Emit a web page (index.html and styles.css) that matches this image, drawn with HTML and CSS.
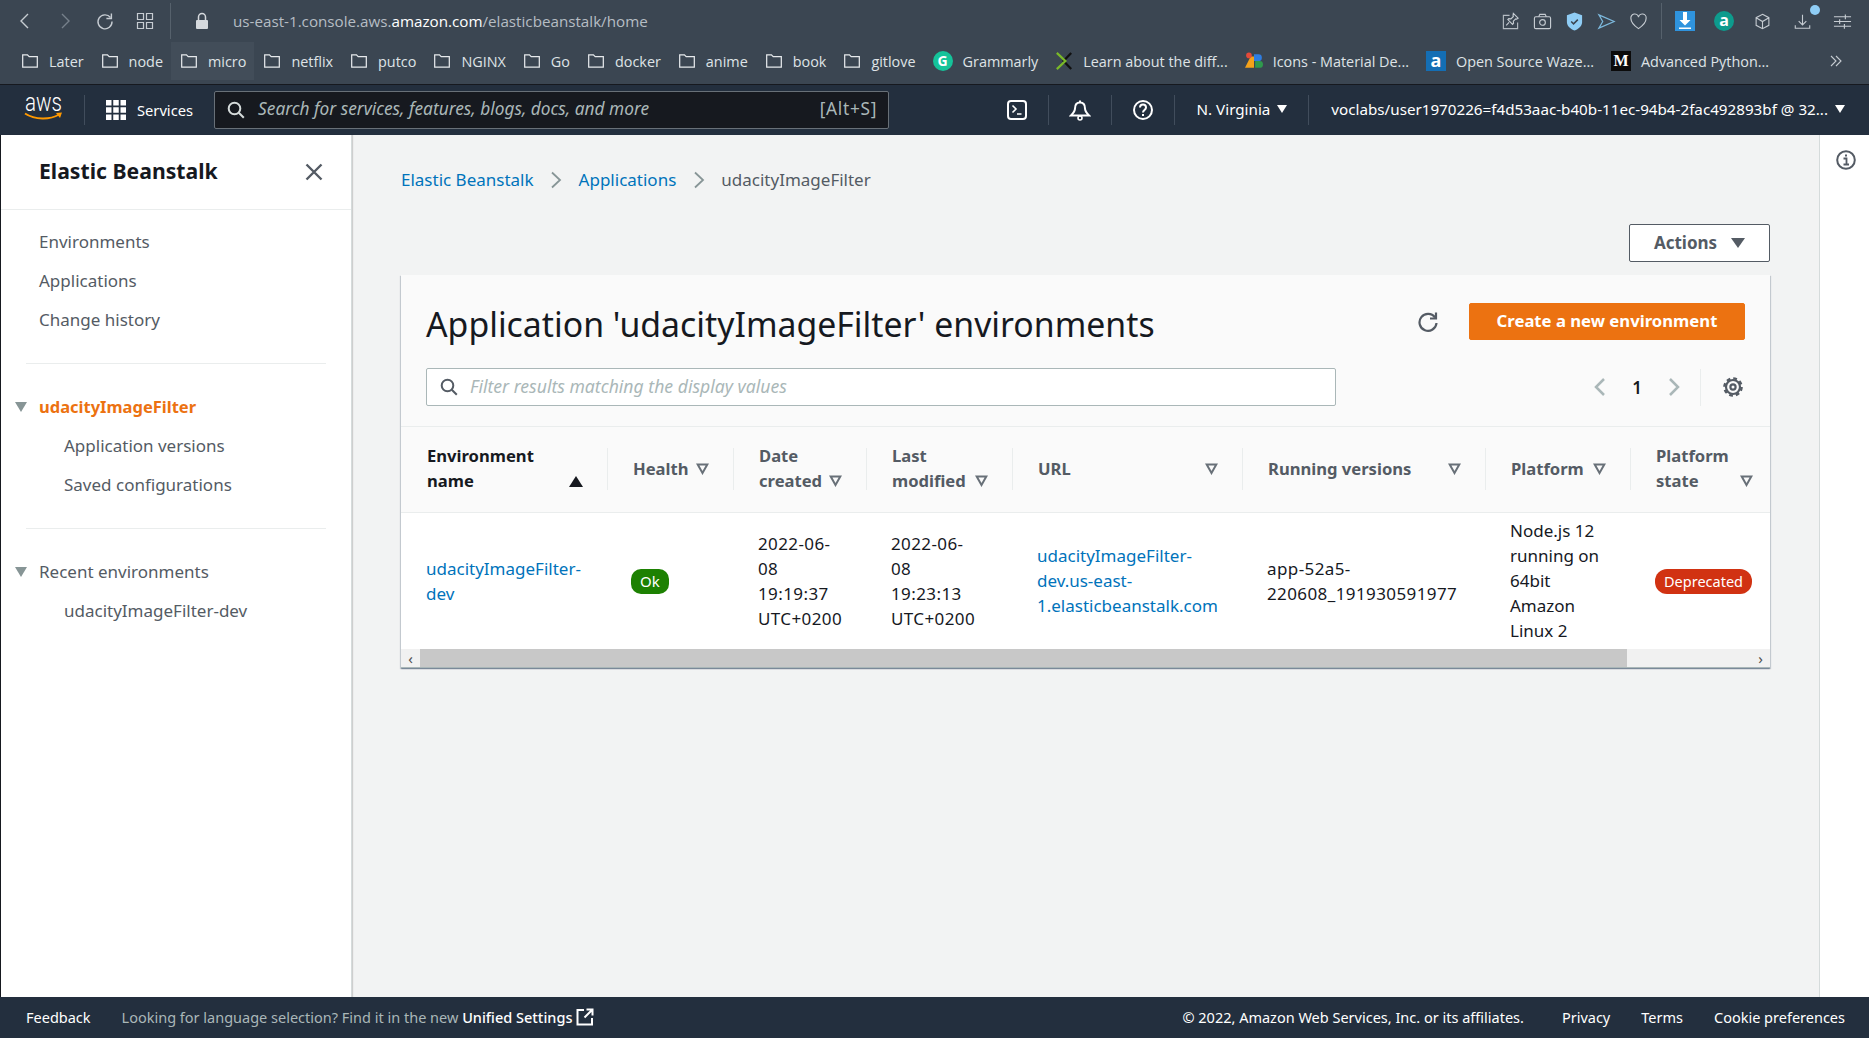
FILE: index.html
```html
<!DOCTYPE html>
<html lang="en">
<head>
    <meta charset="UTF-8">
    <meta name="viewport" content="width=device-width, initial-scale=1.0">
    <title>Elastic Beanstalk</title>
    <link rel="stylesheet" href="styles.css">
</head>
<body>
    <svg class="defs" width="0" height="0">
        <symbol id="folder" viewBox="0 0 16 16"><path d="M1.5 2.5h4.2l1.6 1.6h7.2v9.4h-13z" fill="none" stroke="currentColor" stroke-width="1.1"/></symbol>
        <symbol id="filter" viewBox="0 0 13 12"><path d="M1.7 1.5h9.6L6.500 10z" fill="none" stroke="#687078" stroke-width="2"/></symbol>
    </svg>

    <div class="browser">
        <div class="browser-top">
            <div class="browser-nav">
                <svg class="ico" viewBox="0 0 20 20"><path d="M13 3l-7 7 7 7" fill="none" stroke="#c6ccd2" stroke-width="1.4"/></svg>
                <svg class="ico" viewBox="0 0 20 20"><path d="M7 3l7 7-7 7" fill="none" stroke="#76808b" stroke-width="1.4"/></svg>
                <svg class="ico" viewBox="0 0 20 20"><path d="M15.500 6.500A7 7 0 1 0 17 10.500" fill="none" stroke="#c6ccd2" stroke-width="1.4"/><path d="M16.400 2.500v5h-5" fill="none" stroke="#c6ccd2" stroke-width="1.4"/></svg>
                <svg class="ico" viewBox="0 0 20 20"><path d="M2.500 2.500h6v6h-6zM11.500 2.500h6v6h-6zM2.500 11.500h6v6h-6zM11.500 11.500h6v6h-6z" fill="none" stroke="#c6ccd2" stroke-width="1.2"/></svg>
            </div>
            <div class="browser-sep"></div>
            <svg class="lock" viewBox="0 0 14 18"><path d="M3.500 8V5a3.500 3.500 0 0 1 7 0v3" fill="none" stroke="#d5d9dd" stroke-width="1.5"/><rect x="1" y="8" width="12" height="9" rx="1" fill="#d5d9dd"/></svg>
            <div class="url">us-east-1.console.aws.<b>amazon.com</b>/elasticbeanstalk/home</div>
            <div class="browser-tools">
                <svg class="tool" viewBox="0 0 20 20"><path d="M9 3.500H2.500v14h15V17M6 17.500h11.500V11" fill="none" stroke="#b4bbc2" stroke-width="1.2"/><path d="M13 1.500l5 5-1.500 1-1-.3-2.500 2.500.2 2.300-1 1-5-5 1-1 2.300.2 2.500-2.500-.3-1zM8.500 11l-3 3" fill="none" stroke="#c6ccd2" stroke-width="1.2"/></svg>
                <svg class="tool" viewBox="0 0 20 20"><rect x="1.500" y="5" width="17" height="12.500" rx="1.500" fill="none" stroke="#c6ccd2" stroke-width="1.2"/><path d="M6 5l1.200-2.500h5.600L14 5" fill="none" stroke="#c6ccd2" stroke-width="1.2"/><circle cx="10" cy="11" r="3" fill="none" stroke="#c6ccd2" stroke-width="1.2"/></svg>
                <svg class="tool" viewBox="0 0 20 20"><path d="M10 0.500l8 3v7c0 4.500-4 7.500-8 9-4-1.500-8-4.500-8-9v-7z" fill="#8fcdf5"/><path d="M6.500 10l2.500 2.500 4.500-4.500" fill="none" stroke="#3b4652" stroke-width="1.6"/></svg>
                <svg class="tool" viewBox="0 0 20 20"><path d="M2 3l16 7-16 7 4-7z" fill="none" stroke="#7db9dd" stroke-width="1.3"/></svg>
                <svg class="tool" viewBox="0 0 20 20"><path d="M10 17.500C5 14 2 11 2 6.800A4 4 0 0 1 10 5.500a4 4 0 0 1 8 1.300C18 11 15 14 10 17.500z" fill="none" stroke="#c6ccd2" stroke-width="1.2"/></svg>
                <div class="browser-sep short"></div>
                <svg class="tool blue" viewBox="0 0 20 20"><rect width="20" height="20" fill="#2f93dd"/><path d="M8 1h4v8h3.500L10 14.500 4.500 9H8z" fill="#fff"/><rect x="4" y="16.500" width="12" height="1.500" fill="#fff"/></svg>
                <div class="ext-a">a</div>
                <svg class="tool small" viewBox="0 0 20 20"><path d="M10 1.500l7.500 4v9l-7.500 4-7.500-4v-9zM2.500 5.500l7.500 4.500 7.500-4.500M10 10v8.500" fill="none" stroke="#c6ccd2" stroke-width="1.3"/></svg>
                <div class="dl">
                    <svg class="tool small" viewBox="0 0 20 20"><path d="M10 2v12M5.500 9.500l4.500 4.500 4.500-4.500M1.500 14.500v3.500h17v-3.500" fill="none" stroke="#c6ccd2" stroke-width="1.3"/></svg>
                    <span class="dl-dot"></span>
                </div>
                <svg class="tool" viewBox="0 0 20 20"><path d="M1 5h18M1 10h18M1 15h18M13 2.500v5M7 7.500v5M12 12.500v5" fill="none" stroke="#c6ccd2" stroke-width="1.2"/></svg>
            </div>
        </div>
        <div class="bookmarks">
            <div class="bm"><svg class="bm-ico"><use href="#folder"/></svg>Later</div>
            <div class="bm"><svg class="bm-ico"><use href="#folder"/></svg>node</div>
            <div class="bm hover"><svg class="bm-ico"><use href="#folder"/></svg>micro</div>
            <div class="bm"><svg class="bm-ico"><use href="#folder"/></svg>netflix</div>
            <div class="bm"><svg class="bm-ico"><use href="#folder"/></svg>putco</div>
            <div class="bm"><svg class="bm-ico"><use href="#folder"/></svg>NGINX</div>
            <div class="bm"><svg class="bm-ico"><use href="#folder"/></svg>Go</div>
            <div class="bm"><svg class="bm-ico"><use href="#folder"/></svg>docker</div>
            <div class="bm"><svg class="bm-ico"><use href="#folder"/></svg>anime</div>
            <div class="bm"><svg class="bm-ico"><use href="#folder"/></svg>book</div>
            <div class="bm"><svg class="bm-ico"><use href="#folder"/></svg>gitlove</div>
            <div class="bm"><span class="fav fav-g">G</span>Grammarly</div>
            <div class="bm"><svg class="bm-ico" viewBox="0 0 20 20"><path d="M18 1L9.500 10 18 19" fill="none" stroke="#111" stroke-width="2.500"/><path d="M2 1l9.500 9L2 19" fill="none" stroke="#7ab929" stroke-width="2.500"/></svg>Learn about the diff...</div>
            <div class="bm"><svg class="bm-ico" viewBox="0 0 16 16"><path d="M0 14L5 4h3v10z" fill="#f4a21a"/><circle cx="3.500" cy="3" r="2.500" fill="#e34a3a"/><path d="M8 2h4a3 3 0 0 1 0 6H8z" fill="#2f7de1"/><path d="M9 8h4a3 3 0 0 1 0 6H9z" fill="#2f9a4d"/></svg>Icons - Material De...</div>
            <div class="bm"><span class="fav fav-a">a</span>Open Source Waze...</div>
            <div class="bm"><span class="fav fav-m">M</span>Advanced Python...</div>
            <svg class="more" viewBox="0 0 14 14"><path d="M2 2l5 5-5 5M7 2l5 5-5 5" fill="none" stroke="#c6ccd2" stroke-width="1.1"/></svg>
        </div>
    </div>

    <div class="topnav">
        <svg class="aws-logo" viewBox="0 0 40 26">
            <text x="1" y="14.500" class="aws-text" textLength="37" lengthAdjust="spacingAndGlyphs">aws</text>
            <path d="M1 17.500c10 6.500 25 6.500 34 1" fill="none" stroke="#f90" stroke-width="2"/>
            <path d="M32 17l6-.5-2 5.500z" fill="#f90"/>
        </svg>
        <div class="nav-sep"></div>
        <div class="services">
            <svg class="grid" viewBox="0 0 20 20"><path d="M0 0h5.500v5.500H0zM7.250 0h5.500v5.500h-5.500zM14.500 0H20v5.500h-5.500zM0 7.250h5.500v5.500H0zM7.250 7.250h5.500v5.500h-5.500zM14.500 7.250H20v5.500h-5.500zM0 14.500h5.500V20H0zM7.250 14.500h5.500V20h-5.500zM14.500 14.500H20V20h-5.500z" fill="#fff"/></svg>
            <span>Services</span>
        </div>
        <div class="nav-search">
            <svg class="search-ico light" viewBox="0 0 18 18"><circle cx="7.500" cy="7.500" r="5.800" fill="none" stroke="currentColor" stroke-width="2"/><path d="M11.800 11.800l5 5" stroke="currentColor" stroke-width="2"/></svg>
            <span class="nav-search-text">Search for services, features, blogs, docs, and more</span>
            <span class="nav-search-key">[Alt+S]</span>
        </div>
        <div class="nav-right">
            <div class="nav-icon"><svg viewBox="0 0 20 20" width="20" height="20"><rect x="1" y="1" width="18" height="18" rx="3" fill="none" stroke="#fff" stroke-width="2"/><path d="M5.500 5.500l3.500 3.500-3.500 3.500M10 14h4.500" fill="none" stroke="#fff" stroke-width="1.6"/></svg></div>
            <div class="nav-icon"><svg viewBox="0 0 22 22" width="22" height="22"><path d="M11 1.500v2M11 3.500c-3.500 0-5 2.500-5 6 0 3-1.500 4.500-4 7h18c-2.500-2.500-4-4-4-7 0-3.500-1.500-6-5-6z" fill="none" stroke="#fff" stroke-width="2"/><circle cx="11" cy="19" r="2" fill="none" stroke="#fff" stroke-width="1.6"/></svg></div>
            <div class="nav-icon"><svg viewBox="0 0 22 22" width="22" height="22"><circle cx="11" cy="11" r="9" fill="none" stroke="#fff" stroke-width="2"/><path d="M8 8.500c0-4 6-4 6 0 0 2.500-3 2.500-3 5" fill="none" stroke="#fff" stroke-width="2"/><rect x="10" y="15" width="2" height="2" fill="#fff"/></svg></div>
            <div class="nav-menu region">N. Virginia<span class="caret"></span></div>
            <div class="nav-menu account">voclabs/user1970226=f4d53aac-b40b-11ec-94b4-2fac492893bf @ 32...<span class="caret"></span></div>
        </div>
    </div>

    <div class="layout">
        <div class="sidebar">
            <div class="side-head">
                <span>Elastic Beanstalk</span>
                <svg width="18" height="18" viewBox="0 0 18 18"><path d="M1.500 1.500l15 15M16.500 1.500l-15 15" stroke="#545b64" stroke-width="2.400"/></svg>
            </div>
            <div class="side-group first">
                <div class="side-item">Environments</div>
                <div class="side-item">Applications</div>
                <div class="side-item">Change history</div>
            </div>
            <div class="side-div"></div>
            <div class="side-group">
                <div class="side-item parent active"><span class="side-caret"></span>udacityImageFilter</div>
                <div class="side-item sub">Application versions</div>
                <div class="side-item sub">Saved configurations</div>
            </div>
            <div class="side-div"></div>
            <div class="side-group">
                <div class="side-item parent"><span class="side-caret"></span>Recent environments</div>
                <div class="side-item sub">udacityImageFilter-dev</div>
            </div>
        </div>

        <div class="main">
            <div class="crumbs">
                <a>Elastic Beanstalk</a>
                <svg class="crumb-sep" viewBox="0 0 12 18"><path d="M2 1.500L10 9l-8 7.500" fill="none" stroke="#879596" stroke-width="1.8"/></svg>
                <a>Applications</a>
                <svg class="crumb-sep" viewBox="0 0 12 18"><path d="M2 1.500L10 9l-8 7.500" fill="none" stroke="#879596" stroke-width="1.8"/></svg>
                <span>udacityImageFilter</span>
            </div>
            <div class="page-actions">
                <button type="button" class="btn-actions">Actions<span class="caret dark"></span></button>
            </div>

            <div class="card">
                <div class="card-head">
                    <h1>Application 'udacityImageFilter' environments</h1>
                    <svg class="refresh" viewBox="0 0 22 22"><path d="M18 6.500A8.500 8.500 0 1 0 19.500 12" fill="none" stroke="#545b64" stroke-width="2.200"/><path d="M19 1.500v6h-6" fill="none" stroke="#545b64" stroke-width="2.200"/></svg>
                    <button type="button" class="btn-create">Create a new environment</button>
                </div>
                <div class="card-tools">
                    <div class="filter-box">
                        <svg class="search-ico" viewBox="0 0 18 18"><circle cx="7.500" cy="7.500" r="5.800" fill="none" stroke="currentColor" stroke-width="2"/><path d="M11.800 11.800l5 5" stroke="currentColor" stroke-width="2"/></svg>
                        <span>Filter results matching the display values</span>
                    </div>
                    <div class="pager">
                        <svg class="pg-arrow" viewBox="0 0 12 20"><path d="M10 2L2 10l8 8" fill="none" stroke="#aab7b8" stroke-width="2.500"/></svg>
                        <b>1</b>
                        <svg class="pg-arrow" viewBox="0 0 12 20"><path d="M2 2l8 8-8 8" fill="none" stroke="#aab7b8" stroke-width="2.500"/></svg>
                        <div class="pg-sep"></div>
                        <svg class="gear" viewBox="0 0 20 20"><circle cx="10" cy="10" r="7" fill="none" stroke="#545b64" stroke-width="2.200"/><circle cx="10" cy="10" r="8.600" fill="none" stroke="#545b64" stroke-width="2.400" stroke-dasharray="3.750 3"/><circle cx="10" cy="10" r="2.600" fill="none" stroke="#545b64" stroke-width="2.200"/></svg>
                    </div>
                </div>

                <table class="env-table">
                    <colgroup>
                        <col class="c-name"><col class="c-health"><col class="c-date"><col class="c-mod"><col class="c-url"><col class="c-run"><col class="c-plat"><col class="c-state">
                    </colgroup>
                    <thead>
                        <tr>
                            <th class="no-sep"><div class="th-in"><span class="strong">Environment<br>name</span><span class="sort-up"></span></div></th>
                            <th><div class="th-in"><span>Health</span><svg class="flt"><use href="#filter"/></svg></div></th>
                            <th><div class="th-in"><span>Date<br>created</span><svg class="flt"><use href="#filter"/></svg></div></th>
                            <th><div class="th-in"><span>Last<br>modified</span><svg class="flt"><use href="#filter"/></svg></div></th>
                            <th><div class="th-in"><span>URL</span><svg class="flt"><use href="#filter"/></svg></div></th>
                            <th><div class="th-in"><span>Running versions</span><svg class="flt"><use href="#filter"/></svg></div></th>
                            <th><div class="th-in"><span>Platform</span><svg class="flt"><use href="#filter"/></svg></div></th>
                            <th class="last"><div class="th-in"><span>Platform<br>state</span><svg class="flt"><use href="#filter"/></svg></div></th>
                        </tr>
                    </thead>
                    <tbody>
                        <tr>
                            <td><a>udacityImageFilter-<br>dev</a></td>
                            <td><span class="pill ok">Ok</span></td>
                            <td class="num">2022-06-<br>08<br>19:19:37<br>UTC+0200</td>
                            <td class="num">2022-06-<br>08<br>19:23:13<br>UTC+0200</td>
                            <td><a>udacityImageFilter-<br>dev.us-east-<br>1.elasticbeanstalk.com</a></td>
                            <td class="num">app-52a5-<br>220608_191930591977</td>
                            <td>Node.js 12<br>running on<br>64bit<br>Amazon<br>Linux 2</td>
                            <td><span class="pill bad">Deprecated</span></td>
                        </tr>
                    </tbody>
                </table>

                <div class="hscroll">
                    <span class="hs-arrow">&#8249;</span>
                    <div class="hs-thumb"></div>
                    <span class="hs-arrow right">&#8250;</span>
                </div>
            </div>
        </div>

        <div class="help-rail">
            <svg width="22" height="22" viewBox="0 0 22 22"><circle cx="11" cy="11" r="8.800" fill="none" stroke="#545b64" stroke-width="2"/><path d="M8.500 9.500H11.500V15M8.500 15.500h5.500" fill="none" stroke="#545b64" stroke-width="1.800"/><rect x="10" y="5.500" width="2" height="2" fill="#545b64"/></svg>
        </div>
    </div>

    <div class="footer">
        <span class="ft-feedback">Feedback</span>
        <span class="ft-lang">Looking for language selection? Find it in the new <b>Unified Settings</b></span>
        <svg class="ft-ext" viewBox="0 0 18 18"><path d="M8 2H1.500v14.500H16V10M10.500 1.500h6v6M16.500 1.500l-8 8" fill="none" stroke="#fff" stroke-width="2"/></svg>
        <div class="ft-right">
            <span class="ft-copy">&copy; 2022, Amazon Web Services, Inc. or its affiliates.</span>
            <span>Privacy</span>
            <span>Terms</span>
            <span>Cookie preferences</span>
        </div>
    </div>
</body>
</html>
```

FILE: styles.css
```css
* {
    box-sizing: border-box;
}
html, body {
    height: 100%;
}
body {
    margin: 0;
    display: flex;
    flex-direction: column;
    overflow: hidden;
    font-family: "Noto Sans", Arial, sans-serif;
    font-size: 17px;
    color: #16191f;
    background: #f2f3f3;
}
.defs {
    position: absolute;
}

/* browser chrome */
.browser {
    height: 84px;
    background: #3b4652;
    color: #dfe3e6;
    font-family: "Open Sans", Arial, sans-serif;
    font-size: 14.4px;
    flex: none;
}
.browser-top {
    height: 42px;
    display: flex;
    align-items: center;
    padding-left: 15px;
}
.browser-nav {
    display: flex;
    gap: 20px;
    align-items: center;
}
.ico {
    width: 20px;
    height: 20px;
}
.browser-sep {
    width: 1px;
    height: 36px;
    background: #56616c;
    margin-left: 15px;
}
.browser-sep.short {
    margin: 0;
}
.lock {
    width: 14px;
    height: 18px;
    margin-left: 24px;
}
.url {
    margin-left: 24px;
    font-size: 15.2px;
    color: #b6bdc4;
}
.url b {
    font-weight: 400;
    color: #fff;
}
.browser-tools {
    margin-left: auto;
    display: flex;
    align-items: center;
    gap: 13px;
    padding-right: 17px;
}
.tool {
    width: 19px;
    height: 19px;
    display: block;
}
.tool.blue {
    width: 20px;
    height: 20px;
}
.tool.small {
    width: 17px;
    height: 17px;
    margin: 0 1px;
}
.ext-a {
    width: 20px;
    height: 20px;
    border-radius: 50%;
    background: #0d9b8d;
    color: #fff;
    font-weight: 700;
    font-size: 16px;
    line-height: 18px;
    text-align: center;
    margin: 0 6px;
}
.dl {
    position: relative;
    margin: 0 8px;
}
.dl-dot {
    position: absolute;
    top: -8px;
    right: -8px;
    width: 10px;
    height: 10px;
    border-radius: 50%;
    background: #8fcdf5;
}
.bookmarks {
    height: 42px;
    display: flex;
    align-items: center;
    padding: 0 0 4px 12px;
    position: relative;
}
.bm {
    display: flex;
    align-items: center;
    height: 38px;
    padding: 0 8px 0 9px;
    gap: 10px;
    white-space: nowrap;
}
.bm.hover {
    background: #424d59;
}
.bm-ico {
    width: 18px;
    height: 18px;
    flex: none;
    color: #e6e9ec;
}
.fav {
    width: 20px;
    height: 20px;
    flex: none;
    color: #fff;
    font-weight: 700;
    text-align: center;
}
.fav-g {
    background: #15c39a;
    border-radius: 50%;
    font-size: 14px;
    line-height: 19px;
}
.fav-a {
    background: #146eb4;
    font-size: 18px;
    line-height: 18px;
}
.fav-m {
    background: #0b0b0b;
    font-family: "Liberation Serif", serif;
    font-size: 16px;
    line-height: 20px;
}
.more {
    position: absolute;
    right: 26px;
    width: 14px;
    height: 14px;
}

/* aws nav */
.topnav {
    height: 51px;
    flex: none;
    background: #232f3e;
    border-top: 1px solid #16191f;
    display: flex;
    align-items: center;
    color: #fff;
    font-size: 15.2px;
}
.aws-logo {
    width: 40px;
    height: 26px;
    margin: -3px 0 0 24px;
    overflow: visible;
}
.aws-text {
    font-family: Roboto, sans-serif;
    font-weight: 300;
    font-size: 26px;
    fill: #fff;
}
.nav-sep {
    width: 1px;
    height: 30px;
    background: #414d5c;
    margin-left: 20px;
}
.services {
    display: flex;
    align-items: center;
    gap: 11px;
    margin-left: 21px;
    font-size: 14.7px;
}
.grid {
    width: 20px;
    height: 20px;
}
.nav-search {
    width: 675px;
    height: 38px;
    margin-left: 21px;
    background: #16191f;
    border: 1px solid #687078;
    border-radius: 2px;
    display: flex;
    align-items: center;
    padding: 0 11px 0 12px;
    color: #aab7b8;
    font-size: 17.3px;
}
.search-ico {
    width: 18px;
    height: 18px;
    color: #545b64;
    flex: none;
}
.search-ico.light {
    color: #d5dbdb;
}
.nav-search-text {
    font-style: italic;
    margin: 0 0 3px 13px;
}
.nav-search-key {
    margin: 0 0 3px auto;
    letter-spacing: 0.7px;
}
.nav-right {
    display: flex;
    align-items: center;
    margin-left: auto;
    height: 30px;
    padding-right: 24px;
}
.nav-icon {
    width: 63px;
    display: flex;
    justify-content: center;
    border-right: 1px solid #414d5c;
    height: 30px;
    align-items: center;
}
.nav-menu {
    display: flex;
    align-items: center;
    white-space: nowrap;
    height: 30px;
    padding-bottom: 2px;
}
.region {
    padding-left: 22px;
    padding-right: 21px;
    border-right: 1px solid #414d5c;
}
.account {
    padding-left: 22px;
}
.caret {
    width: 0;
    height: 0;
    margin-left: 7px;
    border-left: 5.5px solid transparent;
    border-right: 5.5px solid transparent;
    border-top: 8px solid #fff;
}
.caret.dark {
    margin-left: 14px;
    margin-top: 2px;
    border-top-color: #545b64;
    border-left-width: 7px;
    border-right-width: 7px;
    border-top-width: 10px;
}

/* page layout */
.layout {
    flex: 1;
    display: flex;
    min-height: 0;
}
.sidebar {
    width: 352px;
    flex: none;
    background: #fff;
    border-left: 1px solid #16191f;
    border-right: 1px solid #d5dbdb;
    box-shadow: 1px 0 1px rgba(0, 0, 0, 0.15);
    color: #545b64;
}
.side-head {
    height: 75px;
    display: flex;
    align-items: center;
    justify-content: space-between;
    padding: 0 28px 3px 38px;
    border-bottom: 1px solid #eaeded;
    font-size: 21.2px;
    font-weight: 700;
    color: #16191f;
}
.side-head svg {
    margin-top: 3px;
}
.side-group {
    padding: 23px 0 24px;
}
.side-group.first {
    padding-top: 12px;
    padding-bottom: 24px;
}
.side-item {
    height: 39px;
    line-height: 39px;
    padding-left: 38px;
    position: relative;
}
.side-item.sub {
    padding-left: 63px;
}
.side-item.active {
    color: #ec7211;
    font-weight: 700;
    font-size: 16.5px;
}
.side-caret {
    position: absolute;
    left: 14px;
    top: 15px;
    width: 0;
    height: 0;
    border-left: 6.5px solid transparent;
    border-right: 6.5px solid transparent;
    border-top: 10px solid #879596;
}
.side-div {
    height: 1px;
    margin: 0 25px;
    background: #eaeded;
}

.main {
    flex: 1;
    min-width: 0;
    padding: 0 49px;
}
.crumbs {
    display: flex;
    align-items: center;
    height: 25px;
    margin-top: 32px;
    color: #545b64;
}
.crumbs a, .env-table a {
    color: #0073bb;
}
.crumb-sep {
    width: 12px;
    height: 18px;
    margin: 0 16.5px;
}
.page-actions {
    display: flex;
    justify-content: flex-end;
    margin-top: 32px;
}
.btn-actions {
    width: 141px;
    height: 38px;
    display: flex;
    align-items: center;
    justify-content: center;
    padding-bottom: 3px;
    background: #fff;
    border: 1px solid #545b64;
    border-radius: 2px;
    color: #545b64;
    font: 700 17px "Noto Sans", Arial, sans-serif;
}
.card {
    margin-top: 13px;
    background: #fafafa;
    box-shadow: 0 1px 1px 0 rgba(0, 31, 63, 0.3), 1px 1px 1px 0 rgba(0, 31, 63, 0.15), -1px 1px 1px 0 rgba(0, 31, 63, 0.15);
}
.card-head {
    height: 93px;
    display: flex;
    align-items: center;
    padding: 0 25px;
}
.card-head h1 {
    margin: 4px 0 0;
    flex: 1;
    font-size: 33.8px;
    font-weight: 400;
    color: #16191f;
}
.refresh {
    width: 22px;
    height: 22px;
    margin: 0 30px 0 0;
}
.btn-create {
    width: 276px;
    height: 37px;
    margin-top: -1px;
    padding-bottom: 3px;
    background: #ec7211;
    border: 1px solid #ec7211;
    border-radius: 2px;
    color: #fff;
    font: 700 16.7px "Noto Sans", Arial, sans-serif;
}
.card-tools {
    height: 59px;
    display: flex;
    align-items: flex-start;
    justify-content: space-between;
    padding: 0 25px;
    border-bottom: 1px solid #eaeded;
}
.filter-box {
    width: 910px;
    height: 38px;
    display: flex;
    align-items: center;
    gap: 12px;
    padding-left: 13px;
    background: #fff;
    border: 1px solid #aab7b8;
    border-radius: 2px;
    color: #aab7b8;
    font-size: 17.6px;
    font-style: italic;
}
.filter-box span {
    margin-bottom: 2px;
}
.pager {
    display: flex;
    align-items: center;
    height: 38px;
}
.pg-arrow {
    width: 12px;
    height: 20px;
}
.pager b {
    width: 62px;
    text-align: center;
    font-weight: 600;
}
.pg-sep {
    width: 1px;
    height: 37px;
    margin-left: 20px;
    background: #eaeded;
}
.gear {
    width: 20px;
    height: 20px;
    margin: 0 2px 0 22px;
}
.env-table {
    width: 100%;
    table-layout: fixed;
    border-collapse: collapse;
    background: #fff;
}
.c-name { width: 206px; }
.c-health { width: 126px; }
.c-date { width: 133px; }
.c-mod { width: 146px; }
.c-url { width: 230px; }
.c-run { width: 243px; }
.c-plat { width: 145px; }
.c-state { width: 140px; }
.env-table th {
    height: 85px;
    padding: 0;
    position: relative;
    background: #fafafa;
    border-bottom: 1px solid #eaeded;
    text-align: left;
    font-size: 16.6px;
    font-weight: 700;
    color: #545b64;
}
.env-table th::before {
    content: "";
    position: absolute;
    left: 0;
    top: 21px;
    height: 42px;
    width: 1px;
    background: #eaeded;
}
.env-table th.no-sep::before {
    display: none;
}
.th-in {
    display: flex;
    align-items: flex-end;
    justify-content: space-between;
    padding: 0 24px 2px 26px;
    line-height: 25px;
}
.th-in .strong {
    color: #16191f;
}
.last .th-in {
    padding-right: 17px;
}
.flt {
    width: 13px;
    height: 12px;
    margin-bottom: 6px;
    flex: none;
}
.sort-up {
    width: 0;
    height: 0;
    margin-bottom: 6px;
    border-left: 7px solid transparent;
    border-right: 7px solid transparent;
    border-bottom: 11px solid #16191f;
}
.env-table td {
    height: 137px;
    padding: 0 0 0 25px;
    line-height: 25px;
    white-space: nowrap;
    vertical-align: middle;
}
.env-table td.num {
    letter-spacing: 0.4px;
}
.pill {
    display: inline-block;
    height: 25px;
    line-height: 24px;
    border-radius: 10px;
    padding: 0 9px;
    color: #fff;
    font-size: 15px;
    vertical-align: middle;
}
.pill.ok {
    background: #1d8102;
    margin-left: -1px;
}
.pill.bad {
    background: #d13212;
    font-size: 14.5px;
    border-radius: 12px;
}
.hscroll {
    height: 19px;
    display: flex;
    align-items: center;
    background: #f1f1f1;
    border-bottom: 1px solid #aab7b8;
    color: #505050;
    font-size: 15px;
}
.hs-arrow {
    width: 19px;
    text-align: center;
    line-height: 16px;
}
.hs-thumb {
    width: 1207px;
    height: 18px;
    background: #c8c8c8;
}
.hs-arrow.right {
    margin-left: auto;
}
.help-rail {
    width: 50px;
    flex: none;
    background: #fff;
    border-left: 1px solid #d5dbdb;
    padding: 14px 0 0 15px;
}

.footer {
    height: 41px;
    flex: none;
    display: flex;
    align-items: center;
    background: #232f3e;
    color: #fff;
    font-size: 14.5px;
    padding: 0 24px 2px 26px;
}
.ft-lang {
    margin-left: 31px;
    color: #aab7b8;
}
.ft-lang b {
    font-weight: 500;
    color: #fff;
}
.ft-ext {
    width: 18px;
    height: 18px;
    margin-left: 4px;
}
.ft-right {
    margin-left: auto;
    display: flex;
    gap: 31px;
}
.ft-copy {
    margin-right: 7px;
}
```
